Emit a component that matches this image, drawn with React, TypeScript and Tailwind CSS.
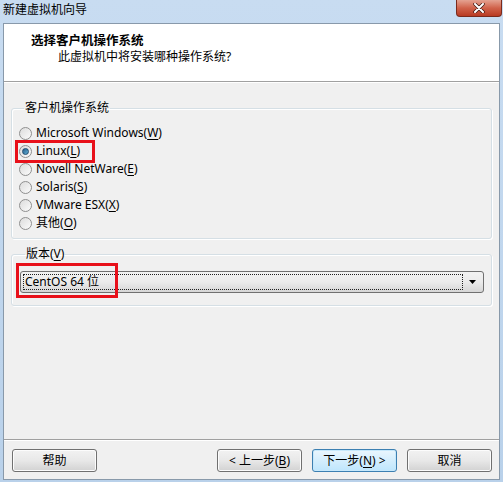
import React from 'react';

const font = { fontFamily: '"Noto Sans", "Noto Sans CJK SC", sans-serif' };

const Radio: React.FC<{ checked?: boolean }> = ({ checked = false }) => (
  <span className="w-[13px] h-[13px] rounded-full border border-[#8f8f8f] bg-gradient-to-br from-[#dcdcdc] to-[#fbfbfb] flex items-center justify-center shrink-0">
    {checked && (
      <span className="w-[7px] h-[7px] rounded-full bg-gradient-to-br from-[#2a5f8a] to-[#5fb0d8] border border-[#1d4a6d]" />
    )}
  </span>
);

const options = [
  { label: 'Microsoft Windows', key: 'W' },
  { label: 'Linux', key: 'L', checked: true },
  { label: 'Novell NetWare', key: 'E' },
  { label: 'Solaris', key: 'S' },
  { label: 'VMware ESX', key: 'X' },
  { label: '其他', key: 'O' },
];

const Button: React.FC<{ children: React.ReactNode; primary?: boolean }> = ({ children, primary = false }) => (
  <button
    className={
      primary
        ? 'w-[85px] h-[23px] rounded-[3px] border border-[#3c7fb1] bg-gradient-to-b from-[#eaf6fd] to-[#bee6fd] text-[12px] text-black leading-none shadow-[inset_0_0_0_1px_#c6e8fb]'
        : 'w-[85px] h-[23px] rounded-[3px] border border-[#707070] bg-gradient-to-b from-[#f2f2f2] via-[#e8e8e8] to-[#d2d2d2] text-[12px] text-black leading-none shadow-[inset_0_0_0_1px_#fcfcfc]'
    }
  >
    {children}
  </button>
);

export default function App() {
  return (
    <div className="w-[503px] h-[482px] flex flex-col bg-gradient-to-b from-[#c8dcf1] to-[#b9d1ea] text-black text-[12px]" style={font}>
      {/* title bar */}
      <div className="h-[23px] flex items-start justify-between shrink-0">
        <span className="pl-[3px] pt-[2px] leading-[16px] text-[12px]">新建虚拟机向导</span>
        <div className="w-[46px] h-[17px] mr-[1px] rounded-b-[4px] border border-t-0 border-[#7a2a1c] bg-gradient-to-b from-[#e4a291] via-[#d0624a] to-[#b83a22] flex items-center justify-center">
          <svg width="12" height="10" viewBox="0 0 12 10">
            <path d="M2 1 L10 9 M10 1 L2 9" stroke="#3b1610" strokeWidth="3.4" strokeLinecap="round" />
            <path d="M2 1 L10 9 M10 1 L2 9" stroke="#ffffff" strokeWidth="2" strokeLinecap="round" />
          </svg>
        </div>
      </div>

      {/* client area */}
      <div className="flex-1 mx-[3px] mb-[2px] border border-[#8899aa] flex flex-col bg-[#f0f0f0]">
        {/* header */}
        <div className="h-[58px] bg-white border-b border-[#a0a0a0] shrink-0 pt-[9px]">
          <div className="pl-[27px] font-bold text-[12.5px] leading-[16px]">选择客户机操作系统</div>
          <div className="pl-[54px] text-[12px] leading-[16px]">此虚拟机中将安装哪种操作系统?</div>
        </div>

        <div className="flex-1 flex flex-col border-t border-white">
          {/* guest OS group */}
          <fieldset className="mt-[17px] mx-[7px] border border-[#d5dfe5] rounded-[3px] shadow-[inset_1px_1px_0_#ffffff,1px_1px_0_#ffffff] pl-[7px] pt-[8px] pb-[6px]">
            <legend className="ml-[5px] px-[1px] leading-[16px] text-[12px]">客户机操作系统</legend>
            {options.map((o) => (
              <div key={o.key} className="relative h-[18px] flex items-center gap-[4px]">
                <Radio checked={o.checked} />
                <span className="leading-[16px]">
                  {o.label}(<span className="underline underline-offset-2">{o.key}</span>)
                </span>
                {o.checked && (
                  <span className="absolute left-[-4px] top-[-2px] w-[80px] h-[23px] border-[3px] border-[#e8101a]" />
                )}
              </div>
            ))}
          </fieldset>

          {/* version group */}
          <fieldset className="mt-[7px] mx-[7px] border border-[#d5dfe5] rounded-[3px] shadow-[inset_1px_1px_0_#ffffff,1px_1px_0_#ffffff] pl-[8px] pr-[7px] pt-[9px] pb-[12px]">
            <legend className="ml-[5px] px-[1px] leading-[16px] text-[12px]">
              版本(<span className="underline underline-offset-2">V</span>)
            </legend>
            <div className="relative h-[22px] rounded-[3px] border border-[#707070] bg-gradient-to-b from-[#f2f2f2] via-[#ebebeb] to-[#d6d6d6] flex items-center pl-[2px] pr-[2px]">
              <div className="flex-1 h-[16px] border border-dotted border-[#202020] flex items-center pl-[1px] leading-[14px]">
                CentOS 64 位
              </div>
              <div className="w-[18px] flex items-center justify-center">
                <svg width="7" height="4" viewBox="0 0 7 4">
                  <path d="M0 0 H7 L3.5 4 Z" fill="#000" />
                </svg>
              </div>
              <span className="absolute left-[-5px] top-[-9px] w-[102px] h-[35px] border-[3px] border-[#e8101a]" />
            </div>
          </fieldset>

          <div className="flex-1" />

          {/* footer */}
          <div className="border-t border-[#a0a0a0] shadow-[inset_0_1px_0_#ffffff] pt-[9px] pb-[7px] pl-[8px] pr-[7px] flex items-center">
            <Button>帮助</Button>
            <div className="flex-1" />
            <div className="flex gap-[10px]">
              <Button>
                &lt; 上一步(<span className="underline underline-offset-2">B</span>)
              </Button>
              <Button primary>
                下一步(<span className="underline underline-offset-2">N</span>) &gt;
              </Button>
              <Button>取消</Button>
            </div>
          </div>
        </div>
      </div>
    </div>
  );
}
